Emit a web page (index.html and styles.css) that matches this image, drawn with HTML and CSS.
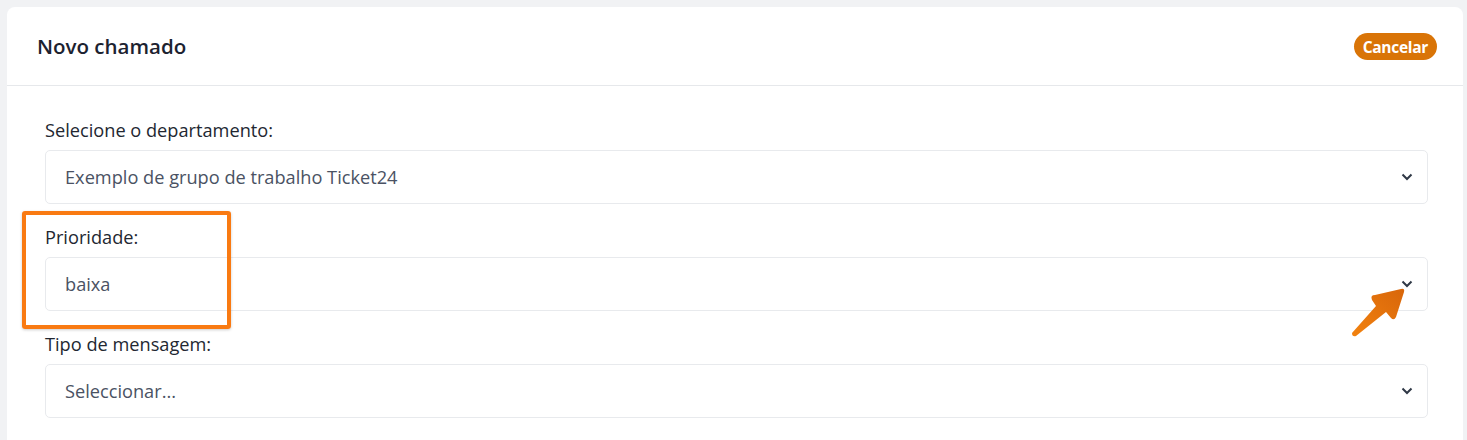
FILE: index.html
```html
<!DOCTYPE html>
<html lang="pt">

<head>
    <meta charset="UTF-8">
    <meta name="viewport" content="width=device-width, initial-scale=1.0">
    <title>Novo chamado</title>
    <link rel="stylesheet" href="styles.css">
</head>

<body>
    <div class="card">
        <div class="card-header">
            <h1 class="title">Novo chamado</h1>
            <button class="btn-cancel">Cancelar</button>
        </div>

        <div class="card-body">
            <div class="form-group">
                <label class="label">Selecione o departamento:</label>
                <div class="select">
                    <span class="select-value">Exemplo de grupo de trabalho Ticket24</span>
                    <svg class="chevron" viewBox="0 0 12 8"><path d="M1.5 1.5 6 6l4.5-4.5" /></svg>
                </div>
            </div>

            <div class="form-group">
                <label class="label">Prioridade:</label>
                <div class="select">
                    <span class="select-value">baixa</span>
                    <svg class="chevron" viewBox="0 0 12 8"><path d="M1.5 1.5 6 6l4.5-4.5" /></svg>
                </div>
            </div>

            <div class="form-group">
                <label class="label">Tipo de mensagem:</label>
                <div class="select">
                    <span class="select-value">Seleccionar...</span>
                    <svg class="chevron" viewBox="0 0 12 8"><path d="M1.5 1.5 6 6l4.5-4.5" /></svg>
                </div>
            </div>
        </div>

        <!-- annotation overlay -->
        <div class="highlight"></div>
        <svg class="arrow" viewBox="0 0 64 56">
            <defs>
                <linearGradient id="arrowGrad" x1="0" y1="1" x2="1" y2="0">
                    <stop offset="0" stop-color="#f2820f" />
                    <stop offset="1" stop-color="#d8660a" />
                </linearGradient>
            </defs>
            <path d="M5 50 L29 23 L25 17 Q23 12 28 12 L54 6 Q58 5 57 9 L49 34 Q47 38 44 35 L39 29 L9 53 Q5 54 5 50 Z"
                fill="url(#arrowGrad)" />
        </svg>
    </div>
</body>

</html>
```

FILE: styles.css
```css
body {
    margin: 0;
    padding: 7px 4px 0 7px;
    background: #f1f2f4;
    font-family: 'Open Sans', sans-serif;
    color: #212529;
}

.card {
    position: relative;
    background: white;
    border-radius: 8px 8px 0 0;
    height: 440px;
}

.card-header {
    display: flex;
    justify-content: space-between;
    align-items: center;
    height: 78px;
    padding: 0 26px 0 30px;
    border-bottom: 1px solid #e6e8eb;
}

.title {
    margin: 0;
    font-size: 20.5px;
    font-weight: 600;
    color: #1c2230;
}

.btn-cancel {
    height: 27px;
    padding: 0 9px;
    margin-top: 1px;
    border: none;
    border-radius: 14px;
    background: #d97407;
    color: white;
    font-family: 'Open Sans', sans-serif;
    font-size: 15.5px;
    font-weight: 700;
    letter-spacing: -0.3px;
}

.card-body {
    padding: 32px 35px 0 38px;
}

.form-group {
    margin-bottom: 21px;
}

.label {
    display: block;
    height: 24px;
    line-height: 24px;
    margin-bottom: 8px;
    font-size: 18.2px;
    color: #222731;
}

.select {
    display: flex;
    justify-content: space-between;
    align-items: center;
    height: 52px;
    padding: 0 14px 0 19px;
    border: 1px solid #e8eaed;
    border-radius: 5px;
}

.select-value {
    font-size: 18.2px;
    color: #4a5263;
}

.chevron {
    width: 12px;
    height: 8px;
    fill: none;
    stroke: #2f3846;
    stroke-width: 2;
}

.highlight {
    position: absolute;
    left: 15px;
    top: 204px;
    width: 201px;
    height: 110px;
    border: 4px solid #f97a12;
    border-radius: 3px;
    box-shadow: 0 1px 3px rgba(0, 0, 0, 0.2);
}

.arrow {
    position: absolute;
    left: 1340px;
    top: 276px;
    width: 64px;
    height: 56px;
}
```
